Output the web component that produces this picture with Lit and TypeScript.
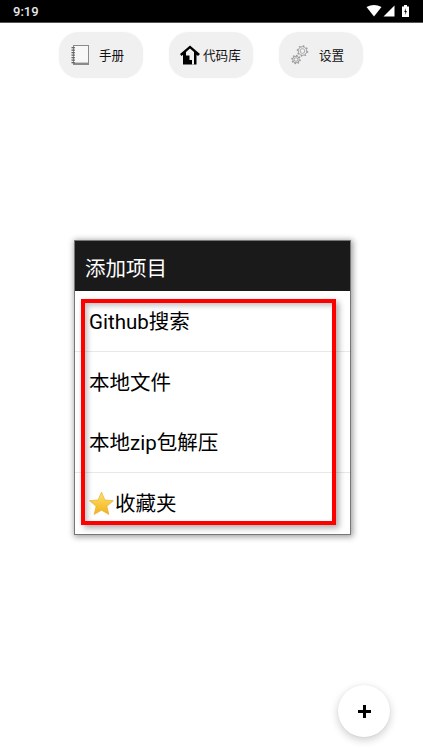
import { LitElement, html, css, svg } from 'lit';
import { customElement } from 'lit/decorators.js';

const gear = (cx: number, cy: number, r: number) => {
  const teeth = [];
  for (let i = 0; i < 8; i++) {
    const a = (i * Math.PI) / 4 + 0.2;
    teeth.push(svg`<line x1=${cx + Math.cos(a) * r} y1=${cy + Math.sin(a) * r} x2=${cx + Math.cos(a) * (r + 1.5)} y2=${cy + Math.sin(a) * (r + 1.5)} stroke="#999" stroke-width="1.5"></line>`);
  }
  return svg`${teeth}<circle cx=${cx} cy=${cy} r=${r} fill="#f0f0f0" stroke="#8a8a8a" stroke-width="0.8"></circle><circle cx=${cx} cy=${cy} r=${r * 0.55} fill="#f0f0f0" stroke="#999" stroke-width="0.8"></circle>`;
};

const spiral = [2, 4.5, 7, 9.5, 12, 14.5, 17].map(
  (y) => svg`<rect x="0.5" y=${y} width="3.4" height="1.3" fill="#666"></rect>`
);

const bookIcon = html`<svg class="icon" viewBox="0 0 18 20" width="18" height="20">
  <rect x="2.5" y="0.5" width="15" height="19" fill="#f7f7f7" stroke="#8a8a8a" stroke-width="1"></rect>
  <rect x="2" y="17.6" width="16" height="2.4" fill="#8a8a8a"></rect>
  ${spiral}
</svg>`;

const houseIcon = html`<svg class="icon code-icon" viewBox="0 0 20 20" width="20" height="20">
  <path d="M10 0.5 L0 9 L1.5 11 L3 9.8 V19.5 H16.5 V9.8 L18 11 L20 9 Z" fill="#000"></path>
  <path d="M10 3.6 L14 7 V19.5 H12 V15 H9.5 V10.5 H6 V7 Z" fill="#f0f0f0"></path>
</svg>`;

const gearsIcon = html`<svg class="icon" viewBox="0 0 18 20" width="18" height="20">
  ${gear(11.5, 6, 4.3)}${gear(5, 14.5, 3.3)}
</svg>`;

@customElement('app-root')
export class AppRoot extends LitElement {
  static styles = css`
    :host {
      display: flex;
      flex-direction: column;
      position: relative;
      width: 423px;
      height: 752px;
      overflow: hidden;
      background: #fff;
      font-family: 'Roboto', 'Noto Sans CJK SC', sans-serif;
      color: #000;
    }

    .status {
      display: flex;
      align-items: center;
      justify-content: space-between;
      box-sizing: border-box;
      height: 23px;
      padding: 0 14px 0 13px;
      background: #000;
      border-bottom: 1px solid #555;
      color: #e8e8e8;
      font-size: 13px;
      font-weight: 500;
    }

    .status-icons {
      display: flex;
      align-items: center;
      gap: 1px;
    }

    .battery {
      margin-left: 6px;
    }

    .toolbar {
      display: flex;
      justify-content: center;
      gap: 26px;
      padding-top: 9px;
      padding-right: 1px;
    }

    .tool {
      display: flex;
      align-items: center;
      box-sizing: border-box;
      width: 84px;
      height: 46px;
      padding-left: 12px;
      border-radius: 20px;
      background: #f0f0f0;
      box-shadow: 0 0 2px rgba(0, 0, 0, 0.06);
      font-size: 12.6px;
      color: #111;
    }

    .tool span {
      margin-left: 10px;
      padding-bottom: 2px;
      white-space: nowrap;
    }

    .tool.code {
      padding-left: 11px;
    }

    .tool.code span {
      margin-left: 3px;
    }

    .icon {
      flex: none;
    }

    .dialog {
      position: absolute;
      left: 75px;
      top: 241px;
      box-sizing: border-box;
      width: 275px;
      height: 293px;
      background: #fff;
      box-shadow: 0 0 0 1px #777, 1px 1px 6px 2px rgba(0, 0, 0, 0.38);
    }

    .dialog-title {
      display: flex;
      align-items: center;
      box-sizing: border-box;
      height: 50px;
      padding: 1px 0 0 10px;
      background: #1a1a1a;
      color: #fff;
      font-size: 20.5px;
    }

    .row {
      display: flex;
      align-items: center;
      box-sizing: border-box;
      height: 60.5px;
      padding: 0 0 2px 14px;
      font-size: 20.5px;
      color: #000;
    }

    .row.line {
      border-bottom: 1px solid #e8e8e8;
    }

    .star {
      flex: none;
      margin-right: 1px;
      margin-top: 4px;
    }

    .highlight {
      position: absolute;
      left: 6px;
      top: 58px;
      box-sizing: border-box;
      width: 255px;
      height: 226px;
      border: 4px solid #f00;
      box-shadow: 3px 3px 6px rgba(0, 0, 0, 0.32), inset 3px 3px 5px rgba(0, 0, 0, 0.22);
      pointer-events: none;
    }

    .fab {
      position: absolute;
      left: 338px;
      top: 685px;
      display: flex;
      align-items: center;
      justify-content: center;
      width: 52px;
      height: 52px;
      border-radius: 50%;
      background: #fff;
      box-shadow: 0 3px 8px rgba(0, 0, 0, 0.2), 0 0 2px rgba(0, 0, 0, 0.06);
    }
  `;

  render() {
    return html`
      <div class="status">
        <span>9:19</span>
        <div class="status-icons">
          <svg viewBox="0 0 16 12" width="16" height="12"><path d="M0.5 2 Q8 -2 15.5 2 L8 11.5 Z" fill="#fff"></path></svg>
          <svg viewBox="0 0 12 12" width="12" height="12"><path d="M11.5 0.5 V11.5 H0.5 Z" fill="#fff"></path></svg>
          <svg class="battery" viewBox="0 0 7 12" width="7" height="12">
            <path d="M2 0 H5 V1.5 H7 V12 H0 V1.5 H2 Z" fill="#fff"></path>
            <path d="M4 3 L2.2 7 H3.4 L3 10 L4.9 6 H3.7 Z" fill="#000"></path>
          </svg>
        </div>
      </div>
      <div class="toolbar">
        <div class="tool">${bookIcon}<span>手册</span></div>
        <div class="tool code">${houseIcon}<span>代码库</span></div>
        <div class="tool">${gearsIcon}<span>设置</span></div>
      </div>
      <div class="dialog">
        <div class="dialog-title">添加项目</div>
        <div class="row line">Github搜索</div>
        <div class="row">本地文件</div>
        <div class="row line">本地zip包解压</div>
        <div class="row">
          <svg class="star" viewBox="0 0 24 24" width="25" height="25">
            <defs>
              <linearGradient id="star-fill" x1="0" y1="0" x2="0" y2="1">
                <stop offset="0" stop-color="#fde26a"></stop>
                <stop offset="1" stop-color="#f3b21c"></stop>
              </linearGradient>
            </defs>
            <path d="M12 1 L15.2 8.6 L23.4 9.3 L17.2 14.6 L19.1 22.6 L12 18.4 L4.9 22.6 L6.8 14.6 L0.6 9.3 L8.8 8.6 Z" fill="url(#star-fill)" stroke="#e3ab2a" stroke-width="0.6"></path>
          </svg>收藏夹
        </div>
        <div class="highlight"></div>
      </div>
      <div class="fab">
        <svg viewBox="0 0 13 13" width="13" height="13"><path d="M5 0 H8 V5 H13 V8 H8 V13 H5 V8 H0 V5 H5 Z" fill="#000"></path></svg>
      </div>
    `;
  }
}
